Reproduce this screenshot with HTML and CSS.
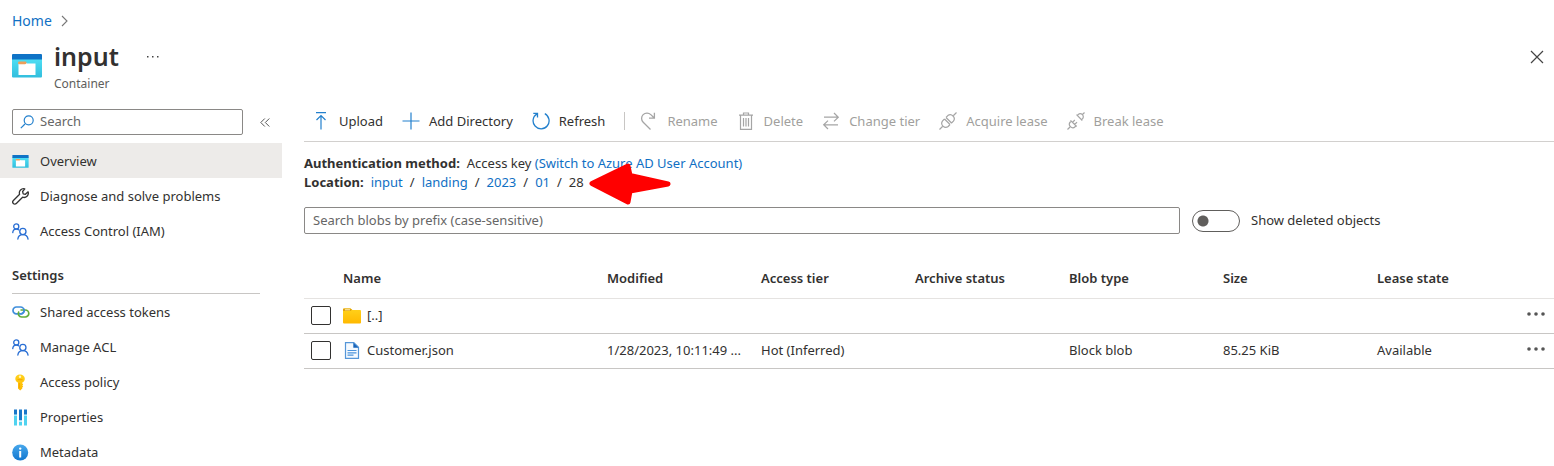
FILE: index.html
```html
<!DOCTYPE html>
<html lang="en">
<head>
<meta charset="utf-8">
<meta name="viewport" content="width=device-width, initial-scale=1">
<title>input - Container</title>
<link rel="stylesheet" href="styles.css">
</head>
<body>
<svg class="defs" aria-hidden="true">
  <defs>
    <linearGradient id="g-cyan" x1="0" y1="1" x2="0" y2="0"><stop offset="0" stop-color="#32bedd"/><stop offset="1" stop-color="#4fe0f5"/></linearGradient>
    <linearGradient id="g-info" x1="0" y1="1" x2="0" y2="0"><stop offset="0" stop-color="#1277cf"/><stop offset="1" stop-color="#48a8ec"/></linearGradient>
    <linearGradient id="g-gold" x1="0" y1="1" x2="0" y2="0"><stop offset="0" stop-color="#ffb900"/><stop offset="1" stop-color="#ffd21c"/></linearGradient>
    <symbol id="container" viewBox="0 0 30 24">
      <path d="M0 4h30v18.500a1 1 0 0 1-1 1H1a1 1 0 0 1-1-1z" fill="url(#g-cyan)"/>
      <path d="M1 0h28a1 1 0 0 1 1 1v4.500H0V1a1 1 0 0 1 1-1z" fill="#0f73c6"/>
      <path d="M6.500 8.500h7l1.500 1h8.500V21h-17z" fill="#fff"/>
      <path d="M7 7.500h6.500q1 0 1 1.300t-1.500 1.500H7q-1 0-1-1.300t1-1.500z" fill="#ee9f58"/>
    </symbol>
    <symbol id="people" viewBox="0 0 18 18">
      <g fill="none" stroke="#2a6fd4" stroke-width="1.400" stroke-linecap="round">
        <circle cx="4.500" cy="3.600" r="2.700"/><path d="M.8 10.200C.9 7.800 2.300 6.400 4.500 6.400c1 0 1.900.3 2.500.8"/>
        <circle cx="11.500" cy="9" r="3.300"/><path d="M6.200 17c.3-3 2.300-4.700 5.300-4.700s5 1.700 5.500 4.700"/>
      </g>
    </symbol>
  </defs>
</svg>

<header class="header">
  <nav class="breadcrumb" aria-label="Breadcrumb">
    <a href="#">Home</a>
    <svg width="7" height="12" viewBox="0 0 7 12"><path d="M1 1l5 5-5 5" fill="none" stroke="#777" stroke-width="1.100"/></svg>
  </nav>
  <div class="title-bar">
    <svg class="title-icon" width="30" height="24"><use href="#container"/></svg>
    <div class="title-text">
      <h1>input</h1>
      <p>Container</p>
    </div>
    <button class="icon-button title-more" aria-label="More"><svg width="12" height="2" viewBox="0 0 12 2"><path d="M0 0h1.500v1.500H0zM5 0h1.500v1.500H5zM10 0h1.500v1.500H10z" fill="#444"/></svg></button>
    <button class="icon-button close" aria-label="Close"><svg width="14" height="14" viewBox="0 0 14 14"><path d="M1 1l12 12M13 1L1 13" stroke="#444" stroke-width="1.200"/></svg></button>
  </div>
</header>

<div class="layout">
  <aside class="sidebar">
    <div class="search-row">
      <label class="search">
        <svg width="14" height="14" viewBox="0 0 14 14"><path d="M.8 13.200L5 9" stroke="#2380cd" stroke-width="1.200"/><circle cx="8.700" cy="5.300" r="4.500" fill="none" stroke="#2380cd" stroke-width="1.200"/></svg>
        <input type="text" placeholder="Search" aria-label="Search">
      </label>
      <button class="icon-button" aria-label="Collapse menu"><svg width="10" height="9" viewBox="0 0 10 9"><path d="M4.800.5l-4 4 4 4M9.300.5l-4 4 4 4" fill="none" stroke="#555" stroke-width="1"/></svg></button>
    </div>
    <nav aria-label="Container menu">
      <a class="nav-item active" href="#"><svg width="17" height="13"><use href="#container"/></svg>Overview</a>
      <a class="nav-item" href="#"><svg width="17" height="17" viewBox="0 0 17 17"><path d="M12.800.9a4.200 4.200 0 0 0-5.200 5.400L1.400 12.500a2 2 0 0 0 2.900 3l6.300-6.300a4.300 4.300 0 0 0 5.500-5.400l-2.700 2.500-2.200-.5-.6-2.300z" fill="none" stroke="#333" stroke-width="1.300" stroke-linejoin="round"/></svg>Diagnose and solve problems</a>
      <a class="nav-item" href="#"><svg width="17" height="17"><use href="#people"/></svg>Access Control (IAM)</a>
      <h2>Settings</h2>
      <a class="nav-item" href="#"><svg width="18" height="12" viewBox="0 0 18 12" fill="none" stroke-width="1.700"><rect x="1" y="1" width="11" height="6.800" rx="3.400" stroke="#3f8edb"/><path d="M8.500 4H13.300a3.400 3.400 0 0 1 0 7H9.700A3.400 3.400 0 0 1 7 5.500" stroke="#63ad3b"/><path d="M8.500 7.800a3.400 3.400 0 0 0 3.300-5" stroke="#3f8edb"/></svg>Shared access tokens</a>
      <a class="nav-item" href="#"><svg width="17" height="17"><use href="#people"/></svg>Manage ACL</a>
      <a class="nav-item" href="#"><svg width="17" height="17" viewBox="0 0 17 17"><path d="M8 .5c2.700 0 4.800 1.800 4.800 4.300 0 1.700-1 3.100-2.500 3.800v1l.9.900-.9.900.9 1-.9.900v1.200L8.200 16.500 6 14.500V8.600C4.400 7.900 3.300 6.500 3.300 4.800 3.300 2.300 5.300.5 8 .5z" fill="url(#g-gold)"/><circle cx="8" cy="2.700" r="1.200" fill="#fff3c0"/><path d="M5.500 5.700h5M7.300 9v5" stroke="#f5a400"/></svg>Access policy</a>
      <a class="nav-item" href="#"><svg width="17" height="17" viewBox="0 0 17 17"><path d="M2 .5h3V6H2zM7 .5h3v11H7zM12 .5h3V6h-3z" fill="#1977c9"/><path d="M2 6h3v10.500H2zM7 13h3v3.500H7zM12 6h3v10.500h-3z" fill="#50d3f0"/><path d="M2 5.500h3v1.300H2zM7 11.500h3V13H7zM12 5.500h3v1.300h-3z" fill="#c9f2fb"/></svg>Properties</a>
      <a class="nav-item" href="#"><svg width="17" height="17" viewBox="0 0 17 17"><circle cx="8.200" cy="8.500" r="8" fill="url(#g-info)"/><circle cx="8.200" cy="4.600" r="1.200" fill="#fff"/><path d="M7.200 7h2v6.500h-2z" fill="#fff"/></svg>Metadata</a>
    </nav>
  </aside>

  <main class="main">
    <div class="toolbar">
      <button><svg width="18" height="18" viewBox="0 0 18 18" fill="none" stroke="#2380cd" stroke-width="1.200"><path d="M4 .7h10M9 17.500V4M4.500 8L9 3.500 13.500 8"/></svg>Upload</button>
      <button><svg width="18" height="18" viewBox="0 0 18 18" stroke="#2380cd" stroke-width="1.200"><path d="M9 .5v17M.5 9h17"/></svg>Add Directory</button>
      <button><svg width="18" height="18" viewBox="0 0 18 18" fill="none" stroke="#2380cd" stroke-width="1.300"><path d="M12.800 1.700A8 8 0 1 1 5 1.900M1.300 1.300h4.200v4.200"/></svg>Refresh</button>
      <span class="divider"></span>
      <button disabled><svg width="18" height="18" viewBox="0 0 18 18" fill="none" stroke="#a5a5a5" stroke-width="1.300"><path d="M10.500 17.500L3.200 10.300A5.400 5.400 0 0 1 10.800 2.600L14 5.700M14.400.8v5.300H9"/></svg>Rename</button>
      <button disabled><svg width="18" height="18" viewBox="0 0 18 18" fill="none" stroke="#a5a5a5" stroke-width="1.200"><path d="M2 3.100h14M6.500 3V1h5v2M3.500 3.300v14h11v-14M6.500 6v8.500M9 6v8.500M11.500 6v8.500"/></svg>Delete</button>
      <button disabled><svg width="18" height="18" viewBox="0 0 18 18" fill="none" stroke="#a5a5a5" stroke-width="1.200"><path d="M2 5.200h14M12 1l4.300 4.200L12 9.400M16 12.800H2M6 8.600l-4.300 4.200L6 17"/></svg>Change tier</button>
      <button disabled><svg width="18" height="18" viewBox="0 0 18 18" fill="none" stroke="#a5a5a5" stroke-width="1.200"><path d="M.5 17.500l3-3M14.500 3.500l3-3M7 5.500l5.500 5.500M5.500 7l5.500 5.500M7 5.500l1.800-1.900a4 4 0 0 1 5.600 5.600L12.500 11M5.500 7L3.600 8.900a4 4 0 0 0 5.600 5.600L11 12.500"/></svg>Acquire lease</button>
      <button disabled><svg width="18" height="18" viewBox="0 0 18 18" fill="none" stroke="#a5a5a5" stroke-width="1.200"><path d="M.5 17.500l2.500-2.500M15 3l2.500-2.500M9.500 2.700l5.800 5.800M10.300 3.500l.8-.9a3 3 0 0 1 4.300 4.300l-.9.800M3.500 8.300l6.200 6.200M4.300 9.100l-1 .9a3.400 3.400 0 0 0 4.800 4.800l.8-1M5.500 10.300l2.300-2.300M7.700 12.500L10 10.200"/></svg>Break lease</button>
    </div>

    <div class="details">
      <div class="detail-line"><b>Authentication method:</b> <span>Access key <a href="#">(Switch to Azure AD User Account)</a></span></div>
      <div class="detail-line">
        <b>Location:</b>
        <a href="#">input</a><span>/</span><a href="#">landing</a><span>/</span><a href="#">2023</a><span>/</span><a href="#">01</a><span>/</span>
        <span class="current">28
          <svg class="arrow" width="82" height="42" viewBox="0 0 82 42"><path d="M3 20.500L39 3l2 9.500 38 8.500-38 7-2 11z" fill="#f00" stroke="#f00" stroke-width="5" stroke-linejoin="round"/></svg>
        </span>
      </div>
    </div>

    <div class="filter">
      <input class="prefix" type="text" placeholder="Search blobs by prefix (case-sensitive)" aria-label="Search blobs by prefix">
      <label class="toggle"><input type="checkbox" role="switch">Show deleted objects</label>
    </div>

    <table class="blobs">
      <colgroup><col class="col-check"><col><col class="col-data"><col class="col-data"><col class="col-data"><col class="col-data"><col class="col-data"><col class="col-lease"><col class="col-more"></colgroup>
      <thead>
        <tr><th></th><th>Name</th><th>Modified</th><th>Access tier</th><th>Archive status</th><th>Blob type</th><th>Size</th><th>Lease state</th><th></th></tr>
      </thead>
      <tbody>
        <tr>
          <td><input type="checkbox" aria-label="Select parent folder"></td>
          <td><span class="name"><svg width="18" height="16" viewBox="0 0 18 16"><path d="M0 1.500Q0 .5 1 .5h6.500L9.500 2H17q1 0 1 1v11.500q0 1-1 1H1q-1 0-1-1z" fill="url(#g-gold)"/><path d="M0 3V1.500Q0 .5 1 .5h6.500L9 1.800 7.500 3z" fill="#dfa20c"/><path d="M2 1.800h5" stroke="#fff0b8"/></svg>[..]</span></td>
          <td></td><td></td><td></td><td></td><td></td><td></td>
          <td><button class="icon-button" aria-label="Parent folder actions"><svg width="18" height="4" viewBox="0 0 18 4" fill="#555"><circle cx="2" cy="2" r="1.800"/><circle cx="9" cy="2" r="1.800"/><circle cx="16" cy="2" r="1.800"/></svg></button></td>
        </tr>
        <tr>
          <td><input type="checkbox" aria-label="Select Customer.json"></td>
          <td><span class="name"><svg width="18" height="17" viewBox="0 0 18 17"><path d="M2.500.7h8.300l4.700 4.600v11h-13z" fill="#f5faff" stroke="#5596d8" stroke-width="1.200"/><path d="M10.300.7l5.200 5.100h-5.200z" fill="#1764ba"/><path d="M4.500 8.500h9M4.500 10.800h9M4.500 13.100h6" stroke="#4b93dc" stroke-width="1.200"/></svg>Customer.json</span></td>
          <td>1/28/2023, 10:11:49 ...</td><td>Hot (Inferred)</td><td></td><td>Block blob</td><td>85.25 KiB</td><td>Available</td>
          <td><button class="icon-button" aria-label="Customer.json actions"><svg width="18" height="4" viewBox="0 0 18 4" fill="#555"><circle cx="2" cy="2" r="1.800"/><circle cx="9" cy="2" r="1.800"/><circle cx="16" cy="2" r="1.800"/></svg></button></td>
        </tr>
      </tbody>
    </table>
  </main>
</div>
</body>
</html>
```

FILE: styles.css
```css
* { box-sizing: border-box; }

body {
  margin: 0;
  background: #fff;
  color: #323130;
  font: 13px/19px "Noto Sans", "Open Sans", sans-serif;
}

h1, h2, p { margin: 0; }
a { color: #1070c4; text-decoration: none; }
svg { display: block; flex: none; }
button, input { font: inherit; color: inherit; }
button { border: 0; padding: 0; background: none; }
input::placeholder { color: #666; opacity: 1; }

.defs { position: absolute; width: 0; height: 0; }
.icon-button { display: flex; align-items: center; justify-content: center; }

.header { padding: 11px 9px 0 12px; }
.breadcrumb { display: flex; align-items: center; gap: 9px; font-size: 14px; }
.title-bar { display: flex; padding-top: 8px; }
.title-icon { margin-top: 16px; }
.title-text { margin-left: 12px; }
h1 { font-size: 25px; line-height: 36px; font-weight: 600; }
.title-text p { color: #605e5c; line-height: 20px; font-size: 12px; }
.title-more { width: 12px; height: 38px; margin-left: 28px; }
.close { width: 16px; height: 38px; margin-left: auto; }

.layout { display: flex; padding-top: 7px; }
.sidebar { flex: none; width: 282px; }
.search-row { display: flex; gap: 17px; height: 42px; padding: 8px 12px; }
.search {
  display: flex;
  align-items: center;
  gap: 6px;
  width: 231px;
  height: 26px;
  padding: 0 7px 1px;
  border: 1px solid #8a8886;
  border-radius: 2px;
}
.search input { width: 100%; min-width: 0; border: 0; padding: 0; outline: 0; background: none; }

.nav-item {
  display: grid;
  grid-template-columns: 18px 1fr;
  gap: 10px;
  align-items: center;
  height: 35px;
  padding: 1px 12px 0;
  color: #323130;
}
.nav-item.active { background: #edebe9; }
.sidebar h2 {
  margin: 17px 22px 0 12px;
  padding-bottom: 8px;
  border-bottom: 1px solid #c8c6c4;
  font-size: 13px;
  line-height: 20px;
  font-weight: 600;
}

.main { flex: 1; min-width: 0; padding-left: 22px; }
.toolbar { display: flex; height: 41px; padding-left: 8px; border-bottom: 1px solid #d2d0ce; }
.toolbar button { display: flex; align-items: center; gap: 9px; margin-right: 19px; }
.toolbar button:disabled { color: #a19f9d; }
.divider { width: 1px; height: 18px; margin: 11px 15px 0 0; background: #c8c6c4; }

.details { padding-top: 12px; }
.detail-line { display: flex; gap: 7px; }
.current { position: relative; }
.arrow { position: absolute; left: calc(100% + 5px); top: -10px; }

.filter { display: flex; gap: 12px; align-items: center; padding-top: 15px; }
.prefix { flex: 1; min-width: 0; height: 27px; padding: 0 8px 1px; border: 1px solid #8a8886; border-radius: 2px; }
.toggle { display: flex; align-items: center; gap: 11px; width: 362px; }
.toggle input {
  appearance: none;
  width: 48px;
  height: 22px;
  margin: 0;
  border: 1px solid #605e5c;
  border-radius: 11px;
  background: radial-gradient(circle at 10px 10px, #605e5c 5px, transparent 6px);
}

.blobs { width: 100%; margin-top: 25px; table-layout: fixed; border-collapse: collapse; }
.col-check { width: 39px; }
.col-data { width: 154px; }
.col-lease { width: 143px; }
.col-more { width: 34px; }
.blobs th { height: 39px; padding: 0; border-bottom: 1px solid #e5e3e1; text-align: left; font-weight: 600; }
.blobs td { height: 35px; padding: 0; border-bottom: 1px solid #c8c6c4; white-space: nowrap; }
.blobs td:first-child { padding-left: 7px; }
.blobs td:last-child { padding-bottom: 3px; }
.blobs input { display: block; appearance: none; width: 20px; height: 19px; margin: 0; border: 1px solid #323130; border-radius: 2px; }
.name { display: flex; align-items: center; gap: 6px; }
.blobs .icon-button { width: 18px; height: 20px; margin-left: 7px; }
```
